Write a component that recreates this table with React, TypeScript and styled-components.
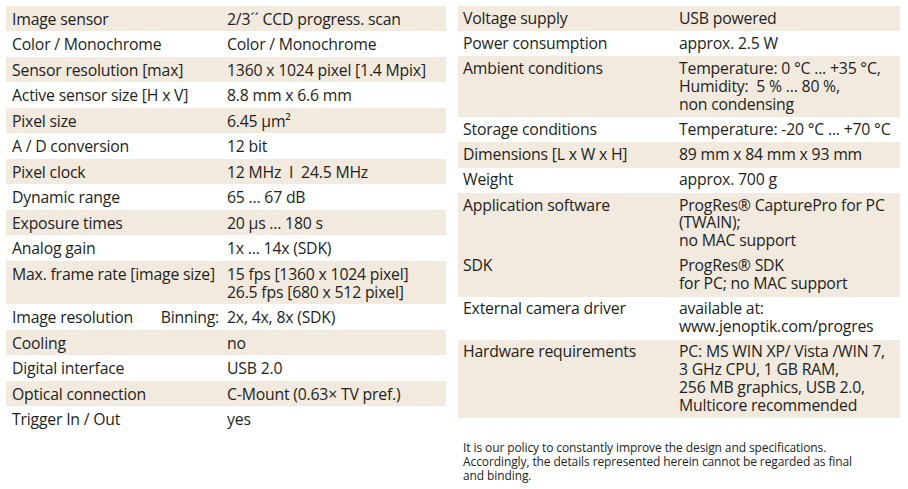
import React from "react";
import styled, { createGlobalStyle } from "styled-components";

const Global = createGlobalStyle`
  html, body { margin: 0; padding: 0; background: #ffffff; }
  body { font-family: "Open Sans", "Noto Sans", sans-serif; color: #231f20; }
`;

const Page = styled.div`
  display: grid;
  grid-template-columns: 440px 442px;
  column-gap: 12px;
  padding: 6px 0 0 6px;
  width: 908px;
  height: 489px;
  box-sizing: border-box;
  align-items: start;
`;

const Column = styled.div`
  display: flex;
  flex-direction: column;
`;

const Table = styled.div`
  display: flex;
  flex-direction: column;
`;

const Row = styled.div<{ $shaded?: boolean; $labelWidth: number; $pad: number; $lh: number }>`
  display: grid;
  grid-template-columns: ${(p) => p.$labelWidth}px 1fr;
  padding: 3.8px 0 3.7px ${(p) => p.$pad}px;
  background: ${(p) => (p.$shaded ? "#f2e9df" : "transparent")};
  font-size: 15.8px;
  line-height: ${(p) => p.$lh}px;
  letter-spacing: -0.2px;
  white-space: nowrap;
`;

const Label = styled.div`
  display: flex;
  justify-content: space-between;
  padding-right: 8px;
`;

const Value = styled.div`
  display: flex;
  flex-direction: column;
`;

const ValueLine = styled.span`
  white-space: pre;
`;

const Note = styled.p`
  margin: 23px 0 0 5px;
  font-size: 12px;
  line-height: 14px;
  letter-spacing: -0.1px;
`;

type Spec = { label: string; extra?: string; value: string[]; shaded?: boolean };

const left: Spec[] = [
  { label: "Image sensor", value: ["2/3´´ CCD progress. scan"], shaded: true },
  { label: "Color / Monochrome", value: ["Color / Monochrome"] },
  { label: "Sensor resolution [max]", value: ["1360 x 1024 pixel [1.4 Mpix]"], shaded: true },
  { label: "Active sensor size [H x V]", value: ["8.8 mm x 6.6 mm"] },
  { label: "Pixel size", value: ["6.45 µm²"], shaded: true },
  { label: "A / D conversion", value: ["12 bit"] },
  { label: "Pixel clock", value: ["12 MHz  I  24.5 MHz"], shaded: true },
  { label: "Dynamic range", value: ["65 ... 67 dB"] },
  { label: "Exposure times", value: ["20 µs ... 180 s"], shaded: true },
  { label: "Analog gain", value: ["1x ... 14x (SDK)"] },
  {
    label: "Max. frame rate [image size]",
    value: ["15 fps [1360 x 1024 pixel]", "26.5 fps [680 x 512 pixel]"],
    shaded: true,
  },
  { label: "Image resolution", extra: "Binning:", value: ["2x, 4x, 8x (SDK)"] },
  { label: "Cooling", value: ["no"], shaded: true },
  { label: "Digital interface", value: ["USB 2.0"] },
  { label: "Optical connection", value: ["C-Mount (0.63× TV pref.)"], shaded: true },
  { label: "Trigger In / Out", value: ["yes"] },
];

const right: Spec[] = [
  { label: "Voltage supply", value: ["USB powered"], shaded: true },
  { label: "Power consumption", value: ["approx. 2.5 W"] },
  {
    label: "Ambient conditions",
    value: ["Temperature: 0 °C ... +35 °C,", "Humidity:  5 % ... 80 %,", "non condensing"],
    shaded: true,
  },
  { label: "Storage conditions", value: ["Temperature: -20 °C ... +70 °C"] },
  { label: "Dimensions [L x W x H]", value: ["89 mm x 84 mm x 93 mm"], shaded: true },
  { label: "Weight", value: ["approx. 700 g"] },
  {
    label: "Application software",
    value: ["ProgRes® CapturePro for PC", "(TWAIN);", "no MAC support"],
    shaded: true,
  },
  { label: "SDK", value: ["ProgRes® SDK", "for PC; no MAC support"], shaded: true },
  { label: "External camera driver", value: ["available at:", "www.jenoptik.com/progres"] },
  {
    label: "Hardware requirements",
    value: [
      "PC: MS WIN XP/ Vista /WIN 7,",
      "3 GHz CPU, 1 GB RAM,",
      "256 MB graphics, USB 2.0,",
      "Multicore recommended",
    ],
    shaded: true,
  },
];

const SpecTable = ({
  rows,
  labelWidth,
  pad,
  lh,
}: {
  rows: Spec[];
  labelWidth: number;
  pad: number;
  lh: number;
}) => (
  <Table>
    {rows.map((r) => (
      <Row key={r.label} $shaded={r.shaded} $labelWidth={labelWidth} $pad={pad} $lh={lh}>
        <Label>
          <span>{r.label}</span>
          {r.extra && <span>{r.extra}</span>}
        </Label>
        <Value>
          {r.value.map((v) => (
            <ValueLine key={v}>{v}</ValueLine>
          ))}
        </Value>
      </Row>
    ))}
  </Table>
);

export default function App() {
  return (
    <>
      <Global />
      <Page>
        <Column>
          <SpecTable rows={left} labelWidth={215} pad={6} lh={18} />
        </Column>
        <Column>
          <SpecTable rows={right} labelWidth={216} pad={5} lh={17.75} />
          <Note>
            It is our policy to constantly improve the design and specifications.
            <br />
            Accordingly, the details represented herein cannot be regarded as final
            <br />
            and binding.
          </Note>
        </Column>
      </Page>
    </>
  );
}
